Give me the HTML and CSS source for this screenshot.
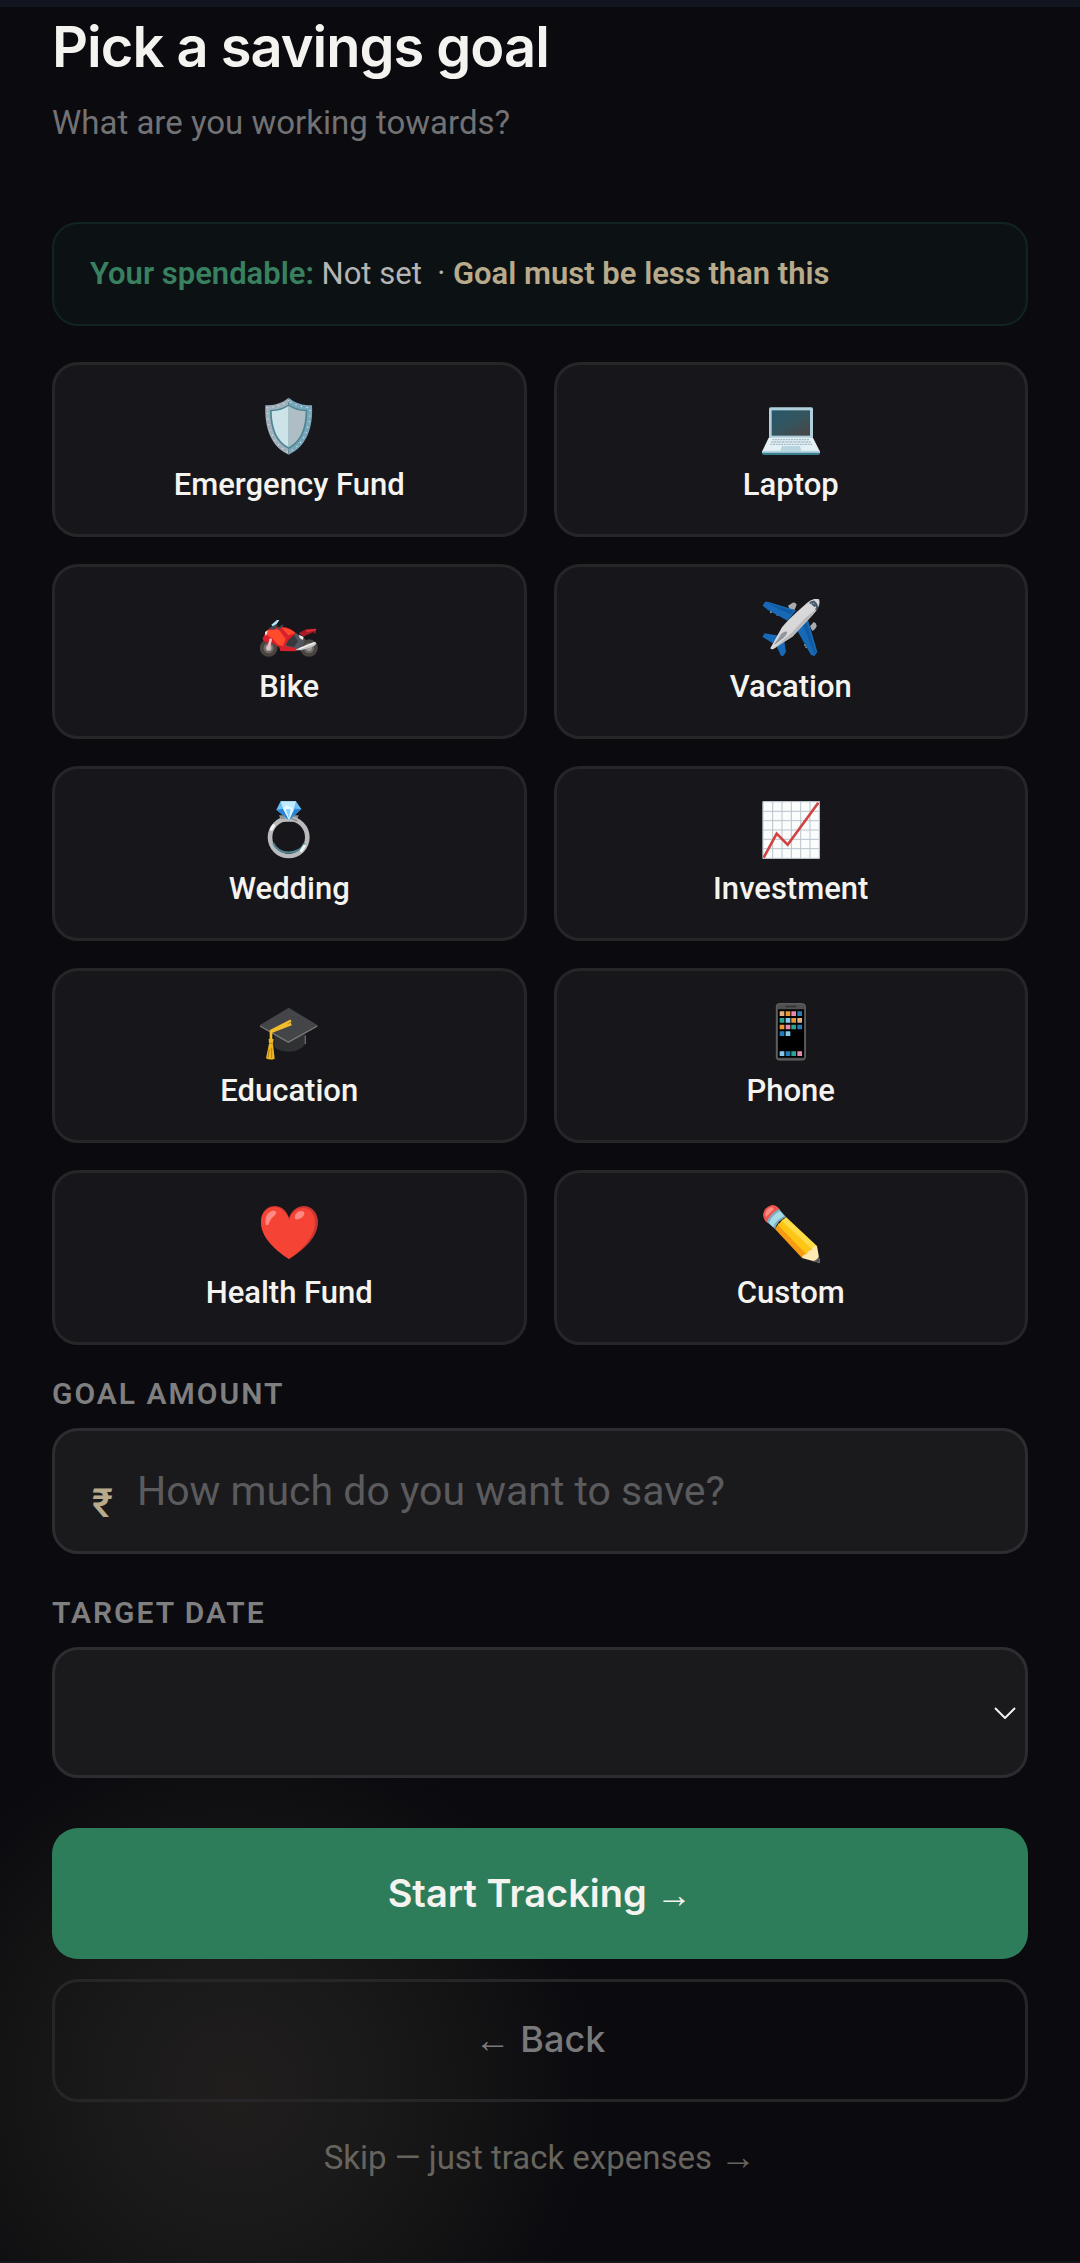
FILE: index.html
```html
<!DOCTYPE html>
<html lang="en">
<head>
<meta charset="utf-8">
<meta name="viewport" content="width=device-width, initial-scale=1">
<title>Pick a savings goal</title>
<link rel="stylesheet" href="styles.css">
</head>
<body>
<main class="page">
  <header class="intro">
    <h1 class="title">Pick a savings goal</h1>
    <p class="subtitle">What are you working towards?</p>
  </header>

  <p class="notice"><strong class="notice-key">Your spendable:</strong> Not set &nbsp;· <strong class="notice-rule">Goal must be less than this</strong></p>

  <form class="goal-form">
    <div class="goals">
      <button type="button" class="goal">
        <svg class="goal-icon" viewBox="182 111 174 174" aria-hidden="true">
          <path fill="#9fb0ba" d="M268 113C250 129 226 136 198 136C195 206 216 261 268 284Z"/>
          <path fill="#79a7ba" d="M268 113C286 129 311 136 338 136C342 206 320 261 268 284Z"/>
          <path fill="none" stroke="#dce7ec" stroke-width="4" stroke-linecap="round" stroke-dasharray="0 17" d="M268 122C248 137 225 142 204 143C203 202 220 252 268 277C316 252 333 202 332 143C311 142 288 137 268 122Z"/>
          <path fill="#4c8593" d="M268 133C252 145 232 150 212 150C212 205 228 248 268 267C308 248 324 205 324 150C304 150 284 145 268 133Z"/>
          <path fill="#cce4e8" d="M268 138C252 149 235 153 217 154C218 204 232 243 268 262Z"/>
          <path fill="#afbec5" d="M268 138C284 149 301 153 319 154C318 204 304 243 268 262Z"/>
        </svg>
        <span>Emergency Fund</span>
      </button>
      <button type="button" class="goal">
        <svg class="goal-icon" viewBox="186 111 174 174" aria-hidden="true">
          <defs><linearGradient id="screen" x1="0" y1="0" x2="1" y2="1"><stop offset="0" stop-color="#28566a"/><stop offset=".45" stop-color="#325660"/><stop offset="1" stop-color="#4b4545"/></linearGradient></defs>
          <rect x="207" y="142" width="132" height="94" rx="5" fill="#b0cfdc"/>
          <rect x="215" y="151" width="115" height="76" fill="url(#screen)"/>
          <path fill="#e5f0f5" d="M206 233H339L360 275H186Z"/>
          <path fill="#3c7f91" d="M186 275H360V280Q359 285 354 285H192Q187 285 186 280Z"/>
          <path fill="#b6d5e1" d="M186 272H360V278H186ZM246 258H300L304 272H241Z"/>
          <path fill="none" stroke="#a5bcc7" stroke-width="4" stroke-dasharray="6 2" d="M217 239H329M214 246H332M211 253H336"/>
        </svg>
        <span>Laptop</span>
      </button>
      <button type="button" class="goal">
        <svg class="goal-icon" viewBox="182 117 174 174" aria-hidden="true">
          <circle cx="208" cy="264" r="21" fill="#6e6965" stroke="#4a4440" stroke-width="11"/>
          <circle cx="329" cy="264" r="21" fill="#6e6965" stroke="#4a4440" stroke-width="11"/>
          <circle cx="208" cy="264" r="9" fill="#b3b3b3"/><circle cx="329" cy="264" r="9" fill="#999"/>
          <path fill="#53565d" d="M248 222L290 219L318 238L306 270L262 270L240 242Z"/>
          <path fill="#37393f" d="M256 244L282 222L296 244L284 261L263 257Z"/>
          <path fill="#a81b29" d="M298 219L321 208L351 206L348 222L342 216L312 230Z"/>
          <path fill="#e02d34" d="M319 210L351 206L349 211L324 217Z"/>
          <path fill="#d81f2b" d="M190 235C189 244 200 249 214 246L240 262L243 273L291 274V265L257 258L268 239L290 220Q276 203 249 200L211 203Q197 218 190 235Z"/>
          <path fill="#ff4a2c" d="M206 211L238 208L259 236L251 259L234 253L219 235L203 226ZM248 204Q270 203 288 219L267 226Z"/>
          <path fill="#3d4a54" d="M209 207L225 192L236 196L224 209ZM235 205L250 193L252 197L238 210Z"/>
          <path fill="#b7e4fa" d="M216 194L233 180H240L232 192L220 199Z"/>
          <path fill="#f2dfd9" d="M197 216L206 210L203 222L198 228Z"/>
          <path stroke="#f5bcc2" stroke-width="8" stroke-linecap="round" d="M214 239L207 266"/>
          <path fill="#c9c9c9" d="M290 268L341 247Q349 244 351 249Q351 256 339 260L305 271H291Z"/>
          <path stroke="#fff" stroke-width="3" d="M300 266L345 249"/>
          <path fill="#eee" d="M299 224L313 231L310 240L301 234Z"/>
        </svg>
        <span>Bike</span>
      </button>
      <button type="button" class="goal">
        <svg class="goal-icon" viewBox="186 117 174 174" aria-hidden="true">
          <path fill="#a9abad" d="M264 137L278 128Q286 126 290 134L284 149H270ZM330 199L341 186Q349 188 350 197Q350 204 337 213Z"/>
          <path stroke="#b3b3b3" stroke-width="5" stroke-linecap="round" d="M213 151V157M232 158V165M250 164V172M311 240L317 242M314 255H321M318 261H325"/>
          <path fill="#1769b5" d="M188 137L195 125L203 125L288 151L263 182L205 151ZM291 211L324 180L352 276L343 288L333 285ZM187 230L194 220L238 227L218 250ZM229 257L252 237L258 276L249 289L243 287Z"/>
          <path fill="#0f5aa3" d="M202 129L280 153L271 163L230 144ZM309 194L319 187L347 276L342 278Z"/>
          <path fill="#d8d8da" d="M215 257L246 202Q264 178 315 134Q340 111 357 118Q364 137 340 163L277 230Q244 250 219 268Q206 269 215 257Z"/>
          <path fill="#b9b9bb" d="M219 268L275 218L316 174L351 145L340 163L277 230Q244 250 219 268Z"/>
          <path fill="#92969a" d="M222 254L244 221Q257 211 261 216Q263 221 249 235L226 253Z"/>
          <path fill="none" stroke="#44586a" stroke-width="6" d="M329 129L341 125Q352 132 351 145L347 149M335 132Q342 132 345 140"/>
        </svg>
        <span>Vacation</span>
      </button>
      <button type="button" class="goal">
        <svg class="goal-icon" viewBox="182 121 174 174" aria-hidden="true">
          <path fill="#929292" d="M239 164H298L290 184H247Z"/>
          <circle cx="268" cy="230" r="56" fill="none" stroke="#b9babb" stroke-width="14"/>
          <path fill="none" stroke="#508391" stroke-width="6" d="M222 247C235 284 301 286 315 247"/>
          <path fill="none" stroke="#909192" stroke-width="5" d="M244 173Q270 167 294 181"/>
          <path fill="none" stroke="#f5f5f5" stroke-width="9" stroke-linecap="round" d="M216 206L223 195M315 256L306 270"/>
          <path fill="#69bef5" d="M244 122H290L306 145L269 179L231 147Z"/>
          <path fill="#2b83d4" d="M231 147L252 144L269 179ZM306 145L286 144L269 179Z"/>
          <path fill="#c1eaff" d="M244 122H290L284 143H251Z"/>
          <path fill="#e6f8ff" d="M251 144L261 134L284 144L269 179Z"/>
          <path fill="#85d2fa" d="M259 146H274L269 174Z"/>
        </svg>
        <span>Wedding</span>
      </button>
      <button type="button" class="goal">
        <svg class="goal-icon" viewBox="186 121 174 174" aria-hidden="true">
          <rect x="188" y="122" width="171" height="172" fill="#fbfcfc"/>
          <path fill="none" stroke="#b9c5cc" stroke-width="3" d="M189 123H358V293H189ZM218 123V293M246 123V293M274 123V293M302 123V293M330 123V293M189 152H358M189 180H358M189 208H358M189 236H358M189 264H358"/>
          <path fill="none" stroke="#cf4444" stroke-width="8" d="M191 291L230 219L263 252L355 126"/>
        </svg>
        <span>Investment</span>
      </button>
      <button type="button" class="goal">
        <svg class="goal-icon" viewBox="182 127 174 174" aria-hidden="true">
          <path fill="#303133" d="M225 220H319V249Q302 273 268 273Q239 273 225 259Z"/>
          <path stroke="#6a6a6a" stroke-width="4" d="M318 225V250"/>
          <path fill="#777" d="M182 193L267 241L354 193V198L267 247L182 198Z"/>
          <path fill="#444548" d="M268 141L354 193L267 242L182 193Z"/>
          <path fill="none" stroke="#f2bd2c" stroke-width="8" stroke-linejoin="round" d="M275 180L215 211V244M276 190L216 213"/>
          <path fill="#eeb724" d="M208 235H223L221 249L226 294Q213 300 200 293L209 249Z"/>
          <path stroke="#b78212" stroke-width="3" d="M209 248H222M210 265L206 291M217 261V292"/>
        </svg>
        <span>Education</span>
      </button>
      <button type="button" class="goal">
        <svg class="goal-icon" viewBox="186 127 174 174" aria-hidden="true">
          <rect x="229" y="129" width="87" height="169" rx="8" fill="#505050" stroke="#666" stroke-width="3"/>
          <path fill="#343434" d="M257 135H289V140H257Z"/>
          <path fill="#000" d="M234 146H312V291H234Z"/>
          <path fill="#e1b47e" d="M239 152h14v14h-14zM292 172h14v14h-14z"/>
          <path fill="#ed9833" d="M257 152h14v14h-14zM274 172h14v14h-14zM239 192h14v14h-14z"/>
          <path fill="#e58ab2" d="M274 152h14v14h-14zM257 192h14v14h-14zM292 272h14v14h-14z"/>
          <path fill="#237db8" d="M292 152h14v14h-14zM292 192h14v14h-14zM239 212h14v14h-14zM257 272h14v14h-14z"/>
          <path fill="#2ba690" d="M239 172h14v14h-14zM274 192h14v14h-14zM274 272h14v14h-14z"/>
          <path fill="#85c9ea" d="M257 172h14v14h-14zM257 212h14v14h-14zM239 272h14v14h-14z"/>
        </svg>
        <span>Phone</span>
      </button>
      <button type="button" class="goal">
        <svg class="goal-icon" viewBox="0 0 58 58" aria-hidden="true">
          <path fill="#c63531" d="M29 54C15 45 1 32 1 17C1 7 7 1 15 1C22 1 27 6 29 13C31 6 37 1 44 1C52 1 58 8 58 17C58 32 44 45 29 54Z"/>
          <path fill="#f54335" d="M29 54C15 45 1 32 1 17C1 8 7 2 14 2C22 2 27 8 29 15C31 8 36 3 43 3C50 3 55 9 55 17C55 32 42 45 29 54Z"/>
          <path fill="#ff8983" d="M6 20C4 14 7 7 12 6C16 5 18 8 14 11C10 14 9 19 8 20ZM35 14C34 9 38 6 41 6C46 6 45 11 41 13C39 14 37 15 35 14Z"/>
        </svg>
        <span>Health Fund</span>
      </button>
      <button type="button" class="goal">
        <svg class="goal-icon" viewBox="0 0 58 58" aria-hidden="true">
          <path fill="#ef5350" d="M1 10Q2 2 10 0Q15 0 18 5L7 18Q2 17 1 10Z"/>
          <path fill="#ff8a80" d="M3 9Q5 3 10 2L12 4L4 12Z"/>
          <path fill="#82aebc" d="M5 17Q8 8 17 4L24 12Q15 16 13 24Z"/>
          <path fill="#a5dce8" d="M7 18Q10 10 18 6L22 11Q14 15 11 22Z"/>
          <path fill="#f59c12" d="M13 24L17 18L46 48L40 53Z"/>
          <path fill="#ffc515" d="M16 20L21 14L52 43L45 50Z"/>
          <path fill="#ffdc48" d="M20 16L24 12L55 41L51 45Z"/>
          <path fill="#ffe8b2" d="M40 53Q41 49 45 49Q46 45 50 45Q50 41 55 41L58 58Z"/>
          <path fill="#55565a" d="M57 51L58 58L50 56Q55 56 57 51Z"/>
        </svg>
        <span>Custom</span>
      </button>
    </div>

    <div class="field">
      <label class="label" for="amount">GOAL AMOUNT</label>
      <div class="control">
        <span class="currency">₹</span>
        <input class="amount" id="amount" type="text" inputmode="numeric" placeholder="How much do you want to save?">
      </div>
    </div>

    <div class="field field-date">
      <label class="label" for="target">TARGET DATE</label>
      <div class="control control-select">
        <select class="date" id="target"><option value=""></option></select>
        <svg class="chevron" viewBox="0 0 22 12" aria-hidden="true"><path d="M1 1L11 11L21 1"/></svg>
      </div>
    </div>

    <div class="actions">
      <button type="submit" class="btn btn-primary">Start Tracking <span class="arrow">→</span></button>
      <button type="button" class="btn btn-back"><span class="arrow">←</span> Back</button>
      <button type="button" class="btn btn-skip">Skip — just track expenses <span class="arrow">→</span></button>
    </div>
  </form>
</main>
</body>
</html>
```

FILE: styles.css
```css
*, *::before, *::after { box-sizing: border-box; }

body {
  margin: 0;
  background: #0a0a0f;
  color: #f5f3ef;
  font-family: Roboto, "Noto Sans", sans-serif;
}

.page {
  min-height: 100vh;
  padding: 8px 52px 80px;
  border-top: 7px solid #10151f;
  border-bottom: 2px solid #17161d;
  background: radial-gradient(circle 370px at 235px calc(100% - 171px), #211d1d 0, #1a1a1b 34%, #131314 66%, #0a0a0f 100%);
}

.title {
  margin: 0;
  font-family: Inter, sans-serif;
  font-size: 56px;
  font-weight: 600;
  line-height: 64px;
  letter-spacing: -1px;
}

.subtitle {
  margin: 24px 0 0;
  color: #727274;
  font-size: 33px;
  line-height: 40px;
}

.notice {
  margin: 79px 0 36px;
  padding: 32px 36px;
  border: 2px solid #11241f;
  border-radius: 26px;
  background: #0c1214;
  color: #b5b5b6;
  font-size: 31px;
  line-height: 36px;
}

.notice-key { color: #38805f; font-weight: 600; }
.notice-rule { color: #b9aa8b; font-weight: 600; }

.goals {
  display: grid;
  grid-template-columns: 1fr 1fr;
  gap: 27px;
}

.goal {
  display: flex;
  flex-direction: column;
  align-items: center;
  gap: 12px;
  padding: 32px 16px;
  border: 3px solid #262629;
  border-radius: 26px;
  background: #17171b;
  color: #f5f3ef;
  font: 500 31px/35px Roboto, sans-serif;
}

.goal-icon { width: 58px; height: 58px; }

.field { margin-top: 31px; }
.field-date { margin-top: 41px; }

.label {
  display: block;
  margin-bottom: 16px;
  color: #7f7f80;
  font-size: 30px;
  font-weight: 600;
  line-height: 36px;
  letter-spacing: 2px;
}

.control {
  display: flex;
  align-items: center;
  border: 3px solid #2d2d31;
  border-radius: 26px;
  background: #1a1a1d;
}

.currency {
  padding: 30px 0 4px 37px;
  color: #b9aa8b;
  font-size: 40px;
  font-weight: 500;
  line-height: 44px;
}

.amount {
  flex: 1;
  min-width: 0;
  height: 120px;
  padding: 0 36px 0 24px;
  border: 0;
  outline: 0;
  background: none;
  color: #f5f3ef;
  font: 41px/48px Roboto, sans-serif;
}

.amount::placeholder { color: #5b5b5d; opacity: 1; }

.control-select { display: grid; }

.date,
.chevron { grid-area: 1 / 1; }

.date {
  width: 100%;
  height: 125px;
  padding: 0 48px 0 36px;
  border: 0;
  background: none;
  color: #f5f3ef;
  font: 41px/48px Roboto, sans-serif;
  appearance: none;
}

.chevron {
  justify-self: end;
  width: 22px;
  height: 12px;
  margin-right: 9px;
  fill: none;
  stroke: #f0f0f0;
  stroke-width: 2;
  pointer-events: none;
}

.actions {
  display: flex;
  flex-direction: column;
  gap: 20px;
  margin-top: 50px;
}

.btn {
  border: 0;
  border-radius: 26px;
  background: none;
  font-family: Inter, sans-serif;
}

.btn-primary {
  padding: 41px 24px 42px;
  background: #2d7d5a;
  color: #f5f3ef;
  font-size: 38px;
  font-weight: 600;
  line-height: 48px;
}

.btn-back {
  padding: 34px 24px 37px;
  border: 3px solid #262629;
  color: #79797b;
  font-size: 36px;
  font-weight: 500;
  line-height: 46px;
}

.btn-skip {
  margin-top: 16px;
  padding: 0;
  color: #66645d;
  font-family: Roboto, sans-serif;
  font-size: 33px;
  line-height: 40px;
}

.arrow {
  font-family: "Liberation Sans", sans-serif;
  font-size: 36px;
  line-height: 1;
}
```
